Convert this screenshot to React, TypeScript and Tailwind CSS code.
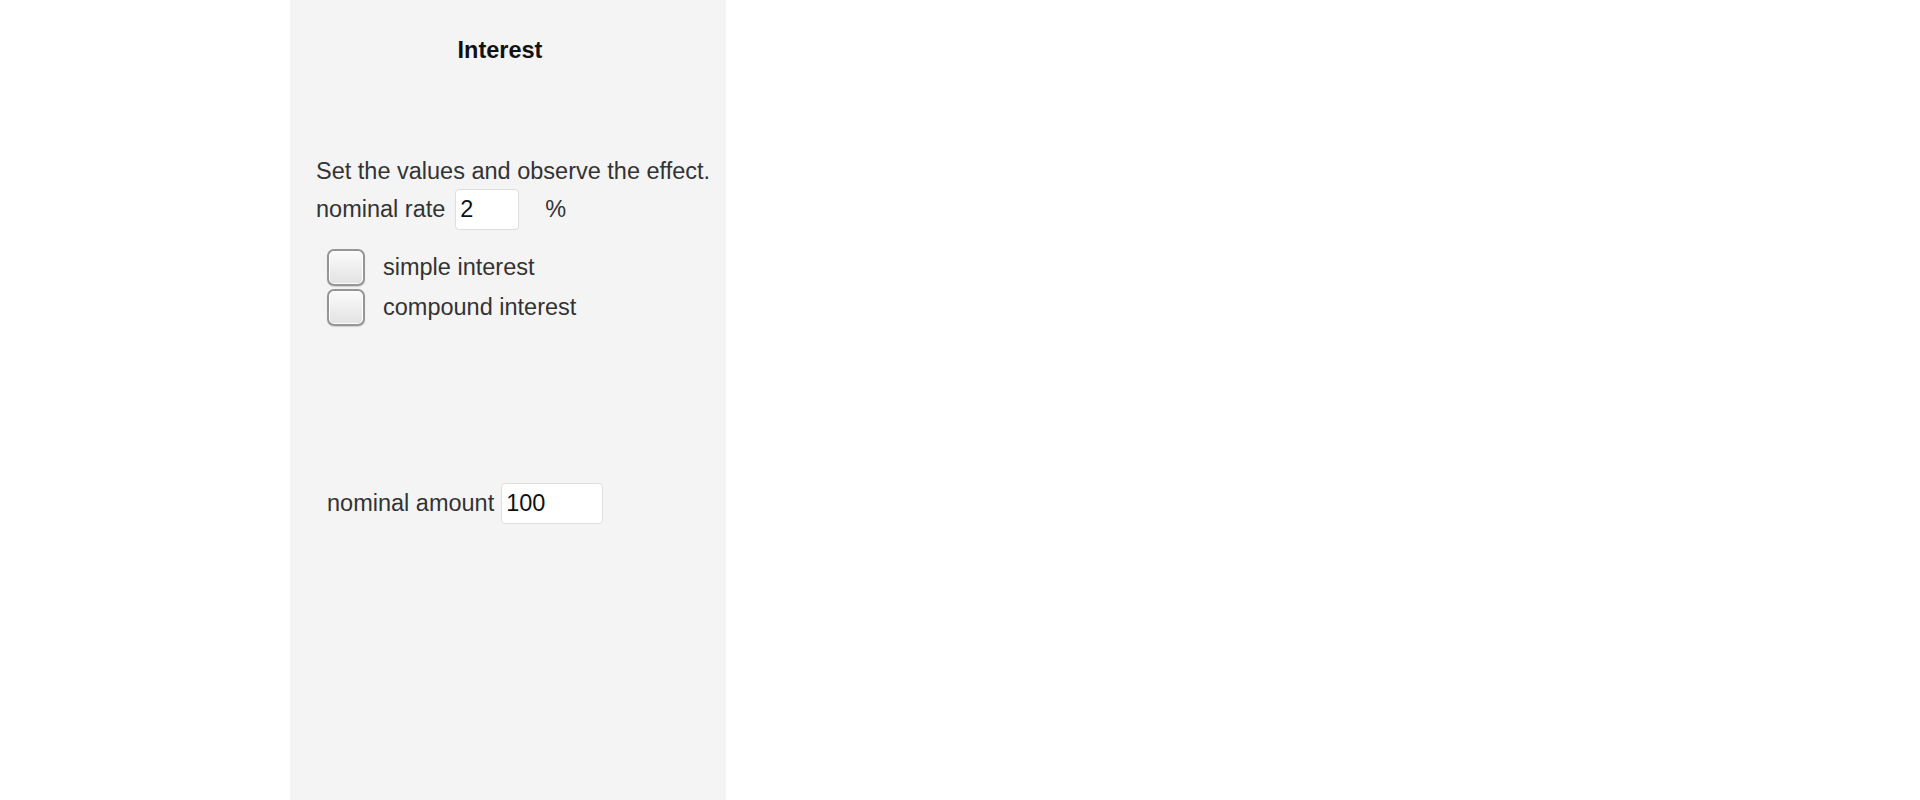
// Interest — simple vs compound interest control panel

const FONT = { fontFamily: '"Liberation Sans", Arial, sans-serif' }

function Checkbox({ label }: { label: string }) {
  return (
    <label className="flex items-center gap-[18px] cursor-pointer">
      <span className="block w-[38px] h-[37px] rounded-[7px] border-2 border-[#959595] bg-gradient-to-b from-[#fbfbfb] to-[#e2e2e2] shadow-[inset_0_0_0_1px_#ffffff,0_1px_1px_rgba(0,0,0,0.15)]" />
      <span className="text-[23.5px] leading-[27px] text-[#333]">{label}</span>
    </label>
  )
}

function NumberBox({ value, width }: { value: string; width: string }) {
  return (
    <input
      type="text"
      defaultValue={value}
      className={`${width} h-[41px] px-[4px] py-0 bg-white border border-[#dedede] rounded-[4px] text-[23.5px] leading-[27px] text-[#111] outline-none`}
      style={FONT}
    />
  )
}

export default function App() {
  return (
    <div className="flex w-[1920px] h-[800px] bg-white" style={FONT}>
      <div className="w-[290px] shrink-0" />

      <div className="w-[436px] h-[800px] shrink-0 bg-[#f4f4f4] pt-[37px] pl-[26px] pr-[42px]">
        {/* Title */}
        <h1 className="text-center text-[23.5px] leading-[27px] font-bold text-[#111]">Interest</h1>

        {/* Rate */}
        <p className="mt-[94px] text-[23.5px] leading-[27px] text-[#333] whitespace-nowrap">
          Set the values and observe the effect.
        </p>
        <div className="mt-[4px] flex items-center">
          <span className="text-[23.5px] leading-[27px] text-[#333]">nominal rate</span>
          <span className="ml-[10px]">
            <NumberBox value="2" width="w-[64px]" />
          </span>
          <span className="ml-[26px] text-[23.5px] leading-[27px] text-[#333]">%</span>
        </div>

        {/* Mode */}
        <div className="mt-[19px] ml-[11px] flex flex-col gap-[3px]">
          <Checkbox label="simple interest" />
          <Checkbox label="compound interest" />
        </div>

        {/* Amount */}
        <div className="mt-[157px] ml-[11px] flex items-center">
          <span className="text-[23.5px] leading-[27px] text-[#333]">nominal amount</span>
          <span className="ml-[7px]">
            <NumberBox value="100" width="w-[102px]" />
          </span>
        </div>
      </div>
    </div>
  )
}
